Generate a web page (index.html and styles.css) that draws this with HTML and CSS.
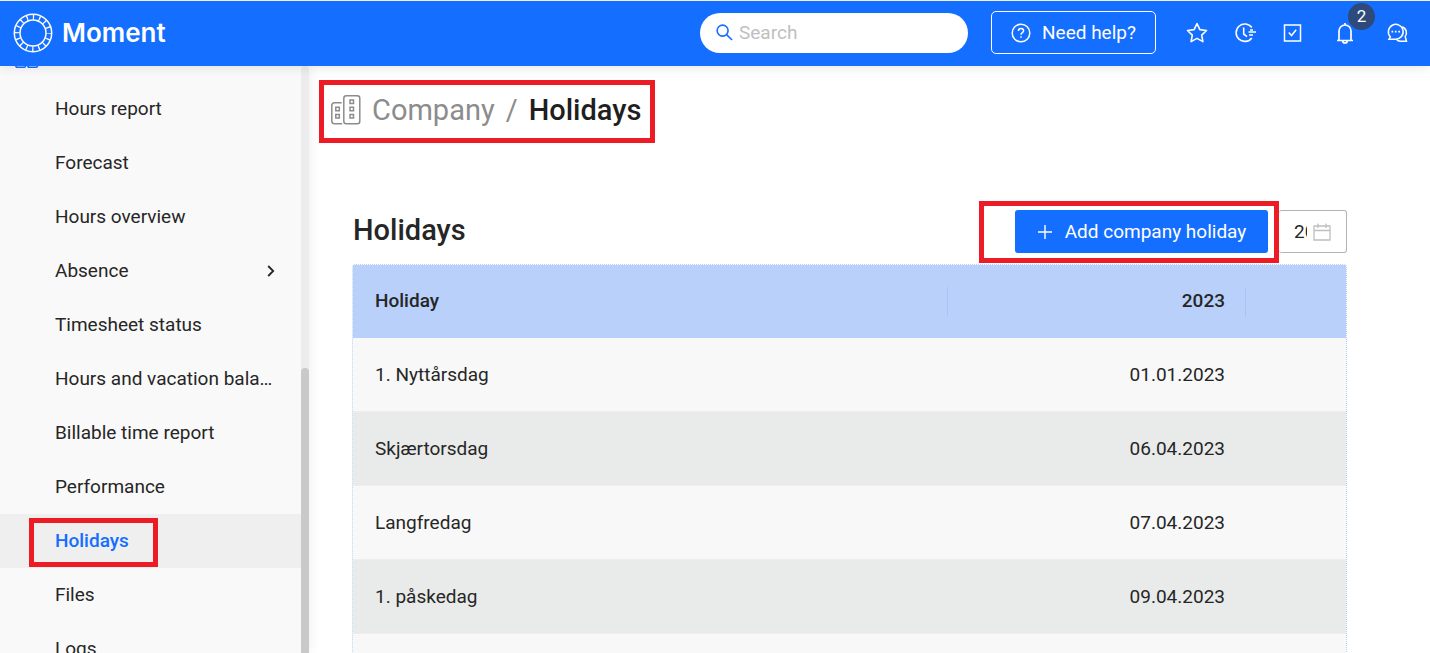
FILE: index.html
```html
<!DOCTYPE html>
<html lang="en">
<head>
<meta charset="utf-8">
<title>Moment – Holidays</title>
<link rel="stylesheet" href="styles.css">
</head>
<body>
<header class="topbar">
  <a class="brand" href="#">
    <svg class="brand-mark" viewBox="0 0 40 40" fill="none" stroke="currentColor">
      <circle cx="20" cy="20" r="18.7" stroke-width="1.5"/>
      <circle cx="20" cy="20" r="13" stroke-width="1.5"/>
      <circle cx="20" cy="20" r="15.8" stroke-width="5" stroke-dasharray="1.3 4.905" stroke-dashoffset=".65"/>
    </svg>
    <span>Moment</span>
  </a>
  <label class="search">
    <svg class="search-icon" viewBox="0 0 18 18" fill="none" stroke="currentColor" stroke-width="1.7"><circle cx="7" cy="7" r="5.8"/><path d="M11.2 11.2 17 17"/></svg>
    <input type="search" placeholder="Search" aria-label="Search">
  </label>
  <button class="help" type="button">
    <svg class="help-icon" viewBox="0 0 20 20" fill="none" stroke="currentColor" stroke-width="1.5"><circle cx="10" cy="10" r="8.8"/><path d="M7.4 8c0-1.6 1.1-2.6 2.6-2.6s2.6 1 2.6 2.4c0 1.7-2.6 1.9-2.6 3.9"/><path d="M10 13.2v1.5"/></svg>
    Need help?
  </button>
  <div class="tools">
    <div class="tool-group">
      <button class="tool" type="button" aria-label="Favourites">
        <svg viewBox="0 0 22 22" fill="none" stroke="currentColor" stroke-width="1.6" stroke-linejoin="round"><path d="m11 1.6 2.9 6 6.6.9-4.800 4.600 1.200 6.500-5.900-3.200-5.900 3.200 1.200-6.500L1.500 8.500l6.600-.9z"/></svg>
      </button>
      <button class="tool" type="button" aria-label="Timer">
        <svg viewBox="0 0 22 22" fill="none" stroke="currentColor" stroke-width="1.600"><path d="M17.800 5.500A8.700 8.700 0 1 0 17.800 15.900"/><path d="M9.700 5.500v6.500l3.300 2.600"/><path d="M16 8h3M14.500 10h7.500M15 13h4"/></svg>
      </button>
      <button class="tool" type="button" aria-label="Tasks">
        <svg viewBox="0 0 22 22" fill="none" stroke="currentColor" stroke-width="1.500"><path d="M2.500 3h16v16h-16z"/><path d="m6.800 10.500 2.700 3 4.700-5.700"/></svg>
      </button>
    </div>
    <button class="tool" type="button" aria-label="Notifications">
      <svg viewBox="0 0 22 22" fill="none" stroke="currentColor" stroke-width="1.700"><path d="M3 18.500h16M5 18V9a6 6 0 0 1 12 0v9M11 1v2M8.800 19a2.200 2 0 0 0 4.400 0"/></svg>
      <span class="badge">2</span>
    </button>
    <button class="tool" type="button" aria-label="Messages">
      <svg viewBox="0 0 22 22" fill="none" stroke="currentColor" stroke-width="1.500"><path d="M4.300 14.800A7.400 7.400 0 1 1 9.500 17.200H3z"/><path d="M16 5c4.500 1 5.600 6.500 3.200 9.600l1.300 4.600h-6.300c-1.500 0-2.700-.6-3.500-1.700"/><path stroke-width="1.700" d="M5.500 9.700h1.700M8.900 9.700h1.700M12.300 9.700H14"/></svg>
    </button>
  </div>
</header>

<div class="workspace">
  <aside class="sidebar">
    <nav class="menu" aria-label="Main">
      <svg class="menu-edge" viewBox="0 0 24 2" fill="none" stroke="currentColor" stroke-width="1.500"><path d="M.8-2v1.800q0 1.400 1.400 1.400h7q1.400 0 1.400-1.400V-2M12.800-2v1.800q0 1.400 1.400 1.400h7q1.400 0 1.400-1.400V-2"/></svg>
      <a class="menu-item" href="#">Hours report</a>
      <a class="menu-item" href="#">Forecast</a>
      <a class="menu-item" href="#">Hours overview</a>
      <a class="menu-item" href="#">Absence
        <svg class="chevron" viewBox="0 0 8 12" fill="none" stroke="currentColor" stroke-width="1.800"><path d="m1.200 1 5 5-5 5"/></svg>
      </a>
      <a class="menu-item" href="#">Timesheet status</a>
      <a class="menu-item" href="#">Hours and vacation bala…</a>
      <a class="menu-item" href="#">Billable time report</a>
      <a class="menu-item" href="#">Performance</a>
      <a class="menu-item active" href="#" aria-current="page"><span class="marked">Holidays</span></a>
      <a class="menu-item" href="#">Files</a>
      <a class="menu-item" href="#">Logs</a>
    </nav>
    <div class="scroll-track"><div class="scroll-thumb"></div></div>
  </aside>

  <main class="main">
    <nav class="crumbs" aria-label="Breadcrumb">
      <svg class="crumb-icon" viewBox="0 0 30 30" fill="none" stroke="currentColor" stroke-width="1.500"><rect x="12.800" y=".8" width="16" height="28" rx="2.500"/><path d="M10.700 7.800H3.500Q.8 7.800.8 10.500v15.600q0 2.700 2.700 2.700h7.700"/><path d="M19 5h3.500v3.500H19zM19 12.300h3.500v3.500H19zM19 19.600h3.500v3.500H19zM4.800 12.300h3.500v3.500H4.800zM4.800 19.600h3.500v3.500H4.800z"/></svg>
      <a class="crumb-link" href="#">Company</a>
      <span class="crumb-link">/</span>
      <span class="crumb-current">Holidays</span>
    </nav>

    <section class="panel">
      <div class="panel-head">
        <h1 class="panel-title">Holidays</h1>
        <div class="add-frame">
          <button class="add" type="button">
            <svg class="plus" viewBox="0 0 16 16" fill="none" stroke="currentColor" stroke-width="1.400"><path d="M8 1v14M1 8h14"/></svg>
            Add company holiday
          </button>
        </div>
        <label class="year">
          <input type="text" value="2023" aria-label="Year">
          <svg class="calendar" viewBox="0 0 18 18" fill="none" stroke="currentColor" stroke-width="1.300"><path d="M1 3h16v14H1zM1 7.500h16M5 .5V5M13 .5V5"/></svg>
        </label>
      </div>
      <table class="holidays">
        <colgroup><col><col class="col-date"><col class="col-actions"></colgroup>
        <thead><tr><th scope="col">Holiday</th><th class="date" scope="col">2023</th><td></td></tr></thead>
        <tbody>
          <tr><td>1. Nyttårsdag</td><td class="date">01.01.2023</td><td></td></tr>
          <tr><td>Skjærtorsdag</td><td class="date">06.04.2023</td><td></td></tr>
          <tr><td>Langfredag</td><td class="date">07.04.2023</td><td></td></tr>
          <tr><td>1. påskedag</td><td class="date">09.04.2023</td><td></td></tr>
          <tr><td></td><td></td><td></td></tr>
        </tbody>
      </table>
    </section>
  </main>
</div>
</body>
</html>
```
FILE: styles.css
```css
:root {
  --blue: #146eff;
  --mark: #ed1c24;
  --ink: #262626;
}
* { box-sizing: border-box; }
body {
  margin: 0;
  height: 100vh;
  overflow: hidden;
  display: flex;
  flex-direction: column;
  font: 19px/24px Roboto, "Liberation Sans", sans-serif;
  color: var(--ink);
  background: #fff;
}
a { color: inherit; text-decoration: none; }
button, input { font: inherit; }
svg { display: block; flex: none; }

.topbar {
  flex: none;
  height: 66px;
  display: flex;
  align-items: center;
  padding: 0 22px 2px 13px;
  border-top: 1px solid #f0f0f0;
  background: var(--blue);
  color: #fff;
  box-shadow: 0 2px 10px rgba(0, 0, 0, .09);
  position: relative;
  z-index: 1;
}
.brand {
  display: flex;
  align-items: center;
  gap: 9px;
  margin-right: auto;
  font: 600 26px/36px Inter, "Liberation Sans", sans-serif;
}
.brand-mark { width: 40px; height: 40px; }
.search {
  display: flex;
  align-items: center;
  gap: 6px;
  width: 268px;
  height: 40px;
  padding: 0 16px;
  border-radius: 20px;
  background: #fff;
  color: var(--blue);
}
.search-icon { width: 17px; height: 17px; }
.search input {
  width: 100%;
  padding: 0;
  border: 0;
  outline: 0;
  background: none;
  color: var(--ink);
}
.search input::placeholder { color: #bfbfbf; }
.help {
  display: flex;
  align-items: center;
  justify-content: center;
  gap: 11px;
  width: 165px;
  height: 43px;
  margin: 0 30px 0 23px;
  padding: 0;
  border: 1px solid #fff;
  border-radius: 5px;
  background: none;
  color: #fff;
}
.help-icon { width: 20px; height: 20px; }
.tools { display: flex; align-items: center; gap: 30px; }
.tool-group { display: flex; gap: 26px; }
.tool {
  position: relative;
  padding: 0;
  border: 0;
  background: none;
  color: #fff;
}
.tool svg { width: 22px; height: 22px; }
.badge {
  position: absolute;
  left: 14px;
  top: -19px;
  width: 27px;
  height: 27px;
  border-radius: 50%;
  background: #2d4a7a;
  font-size: 17px;
  line-height: 27px;
  text-align: center;
}

.workspace { flex: 1; min-height: 0; display: flex; }
.sidebar {
  flex: none;
  width: 309px;
  display: flex;
  overflow: hidden;
  background: #f9f9f9;
  box-shadow: 0 0 12px rgba(0, 0, 0, .08);
}
.menu { flex: 1; min-width: 0; }
.menu-edge {
  width: 24px;
  height: 2px;
  margin: 0 0 14px 15px;
  color: var(--blue);
}
.menu-item {
  display: flex;
  align-items: center;
  justify-content: space-between;
  height: 54px;
  padding: 0 26px 0 55px;
  white-space: nowrap;
}
.menu-item.active { background: #efefef; color: var(--blue); font-weight: 500; }
.chevron { width: 8px; height: 12px; }
.marked { position: relative; }
.marked::after {
  content: "";
  position: absolute;
  inset: -11px -29px -14px -26px;
  border: 5px solid var(--mark);
}
.scroll-track { width: 8px; background: #ececec; border-radius: 4px 4px 0 0; }
.scroll-thumb {
  height: 100%;
  margin-top: 302px;
  border-radius: 4px;
  background: #c9c9ca;
}

.main { flex: 1; min-width: 0; padding: 14px 83px 0 10px; }
.crumbs {
  display: flex;
  align-items: center;
  gap: 11px;
  width: fit-content;
  height: 63px;
  padding: 0 9px 4px 7px;
  border: 5px solid var(--mark);
  font-size: 29px;
  line-height: 36px;
}
.crumb-icon { width: 30px; height: 30px; color: #8c8c8c; }
.crumb-link { color: #8c8c8c; }
.crumb-current { font-weight: 500; color: #1f1f1f; }

.panel { margin: 58px 0 0 33px; }
.panel-head { display: flex; align-items: center; height: 62px; padding-left: 1px; }
.panel-title {
  margin: 0 auto 4px 0;
  font-size: 29px;
  line-height: 36px;
  font-weight: 500;
}
.add-frame {
  padding: 4px 6px 5px 31px;
  border: 5px solid var(--mark);
}
.add {
  display: flex;
  align-items: center;
  justify-content: center;
  gap: 12px;
  width: 253px;
  height: 43px;
  padding: 0;
  border: 0;
  border-radius: 3px;
  background: var(--blue);
  color: #fff;
}
.plus { width: 16px; height: 16px; }
.year {
  display: flex;
  align-items: center;
  gap: 6px;
  width: 68px;
  height: 43px;
  margin-bottom: 1px;
  padding: 0 16px 0 15px;
  border: 1px solid #b3b3b3;
  border-left: 0;
  border-radius: 3px;
  color: #bfbfbf;
}
.year input {
  width: 13px;
  padding: 0;
  border: 0;
  outline: 0;
  background: none;
  color: var(--ink);
}
.calendar { width: 18px; height: 18px; }

.holidays {
  width: 100%;
  margin-top: 1px;
  table-layout: fixed;
  border-collapse: separate;
  border-spacing: 0;
  border: 1px dotted #b8cffa;
  border-radius: 4px;
}
.col-date { width: 298px; }
.col-actions { width: 100px; }
.holidays th, .holidays td {
  height: 74px;
  padding: 0 21px 0 22px;
  border-bottom: 1px solid #eeeeee;
  background: #f8f8f8;
  text-align: left;
}
.holidays tr:nth-child(even) td { background: #e9ebea; }
.holidays thead th, .holidays thead td {
  height: 73px;
  padding-bottom: 2px;
  border-bottom: 0;
  background: linear-gradient(#aac4f3, #aac4f3) right center / 1px 30px no-repeat #b9d0fb;
  font-weight: 500;
}
.holidays thead td { background: #b9d0fb; }
.holidays .date { text-align: right; }
```
